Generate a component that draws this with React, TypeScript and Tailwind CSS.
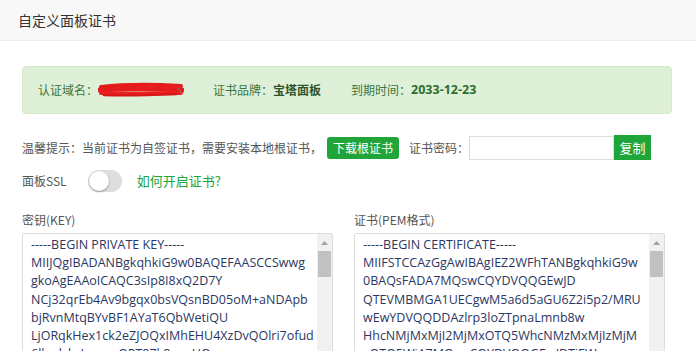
import { useState } from "react"

const keyLines = [
    "-----BEGIN PRIVATE KEY-----",
    "MIIJQgIBADANBgkqhkiG9w0BAQEFAASCCSwwg",
    "gkoAgEAAoICAQC3sIp8I8xQ2D7Y",
    "NCj32qrEb4Av9bgqx0bsVQsnBD05oM+aNDApb",
    "bjRvnMtqBYvBF1AYaT6QbWetiQU",
    "LjORqkHex1ck2eZJOQxIMhEHU4XzDvQOlri7ofud",
    "6llwdyksLsocmQPT87k8ouvHQ",
]

const certLines = [
    "-----BEGIN CERTIFICATE-----",
    "MIIFSTCCAzGgAwIBAgIEZ2WFhTANBgkqhkiG9w",
    "0BAQsFADA7MQswCQYDVQQGEwJD",
    "QTEVMBMGA1UECgwM5a6d5aGU6Z2i5p2/MRU",
    "wEwYDVQQDDAzlrp3loZTpnaLmnb8w",
    "HhcNMjMxMjI2MjMxOTQ5WhcNMzMxMjIzMjM",
    "xOTQ5WjA7MQswCQYDVQQGEwJDTjEW",
]

// fake textarea with the classic windows scrollbar on the right
function CodeBox({ lines }: { lines: string[] }) {
    return (
        <div className="flex h-[200px] overflow-hidden rounded-[2px] border border-[#dddddd] bg-white">
            <div className="flex-1 overflow-hidden pl-[8px] pt-[2px] font-['Open_Sans',sans-serif] text-[12.5px] leading-[18.2px] text-[#2b3762]">
                {lines.map((l, i) => (
                    <div key={i} className="whitespace-nowrap">{l}</div>
                ))}
            </div>
            <div className="flex w-[15px] flex-col items-center bg-[#f1f1f1]">
                <div className="flex h-[17px] items-center justify-center">
                    <svg width="7" height="4" viewBox="0 0 7 4">
                        <path d="M0 4 L3.5 0 L7 4 Z" fill="#a3a3a3" />
                    </svg>
                </div>
                <div className="h-[26px] w-[13px] bg-[#c1c1c1]" />
            </div>
        </div>
    )
}

export default function App() {
    const [ssl, setSsl] = useState(false)

    return (
        <div className="h-[351px] w-[696px] overflow-hidden bg-white font-['Noto_Sans_CJK_SC',sans-serif] text-[12px] text-[#555555]">
            <div className="flex h-[41px] items-center border-b border-[#eeeeee] bg-[#f8f8f8] px-[18px] text-[14px] text-[#333333]">
                自定义面板证书
            </div>

            <div className="px-[22px]">
                {/* cert info */}
                <div className="mt-[25px] flex h-[48px] w-[650px] items-center rounded-[4px] border border-[#d6e9c6] bg-[#dff0d8] pl-[15px] text-[12px] text-[#3c763d]">
                    <span>认证域名：</span>
                    {/* redacted domain */}
                    <svg width="86" height="16" viewBox="0 0 86 16" className="mr-[29px]">
                        <path d="M3 5 C20 3 50 2 83 4" stroke="#e51c1c" strokeWidth="4" fill="none" strokeLinecap="round" />
                        <path d="M2 8 C25 6 55 6 84 8" stroke="#e51c1c" strokeWidth="5" fill="none" strokeLinecap="round" />
                        <path d="M3 11 C30 12 60 11 83 11" stroke="#ea2020" strokeWidth="4" fill="none" strokeLinecap="round" />
                        <path d="M6 13 C30 14 55 13 78 12" stroke="#d81818" strokeWidth="2.5" fill="none" strokeLinecap="round" />
                        <path d="M80 6 L84 12" stroke="#6b8f5a" strokeWidth="1" />
                    </svg>
                    <span>证书品牌：</span>
                    <span className="mr-[30px] font-bold text-[#2b542c]">宝塔面板</span>
                    <span>到期时间：</span>
                    <span className="font-['Open_Sans',sans-serif] text-[12.5px] font-bold text-[#2b6e2f]">2033-12-23</span>
                </div>

                {/* tips + password */}
                <div className="mt-[21px] flex h-[25px] items-center">
                    <span>温馨提示：当前证书为自签证书，需要安装本地根证书，</span>
                    <button className="ml-[5px] flex h-[22px] items-center rounded-[3px] bg-[#20a53a] px-[6px] text-[12px] text-white">
                        下载根证书
                    </button>
                    <span className="ml-[10px]">证书密码：</span>
                    <input className="h-[24px] w-[145px] border border-[#dddddd] px-[5px] outline-none" />
                    <button className="flex h-[25px] w-[37px] items-center justify-center bg-[#20a53a] text-[13px] text-white">
                        复制
                    </button>
                </div>

                {/* panel ssl */}
                <div className="mt-[10px] flex h-[22px] items-center">
                    <span>面板SSL</span>
                    <button
                        onClick={() => setSsl(!ssl)}
                        className={`ml-[21px] flex h-[22px] w-[34px] items-center rounded-full px-[1px] ${ssl ? "justify-end bg-[#20a53a]" : "bg-[#dddddd]"}`}
                    >
                        <span className="h-[20px] w-[20px] rounded-full bg-white shadow-[0_1px_2px_rgba(0,0,0,0.35)]" />
                    </button>
                    <a className="ml-[15px] text-[13px] text-[#20a53a]">如何开启证书?</a>
                </div>

                {/* key / cert */}
                <div className="mt-[20px] grid w-[643px] grid-cols-2 gap-x-[21px]">
                    <div>
                        <div className="h-[16px] leading-[16px]">密钥(KEY)</div>
                        <div className="mt-[5px]">
                            <CodeBox lines={keyLines} />
                        </div>
                    </div>
                    <div>
                        <div className="h-[16px] leading-[16px]">证书(PEM格式)</div>
                        <div className="mt-[5px]">
                            <CodeBox lines={certLines} />
                        </div>
                    </div>
                </div>
            </div>
        </div>
    )
}
